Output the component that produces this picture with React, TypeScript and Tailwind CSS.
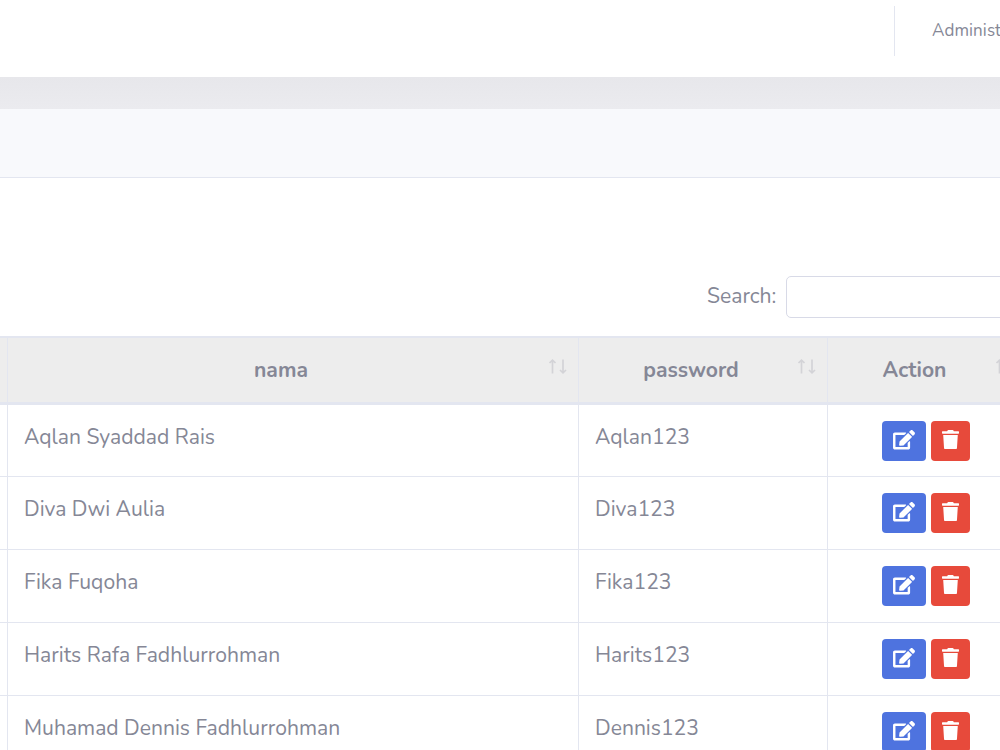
import { FaEdit, FaTrash } from "react-icons/fa"

const users = [
  { name: "Aqlan Syaddad Rais", password: "Aqlan123" },
  { name: "Diva Dwi Aulia", password: "Diva123" },
  { name: "Fika Fuqoha", password: "Fika123" },
  { name: "Harits Rafa Fadhlurrohman", password: "Harits123" },
  { name: "Muhamad Dennis Fadhlurrohman", password: "Dennis123" },
]

function SortArrows() {
  return (
    <svg
      width="19"
      height="15"
      viewBox="0 0 19 15"
      fill="none"
      stroke="#d3d3d7"
      strokeWidth="1.7"
      className="absolute right-[11px] top-[21px]"
    >
      <path d="M4.5 14.5V1.5M1.5 4L4.5 1.2L7.5 4" />
      <path d="M15 0.5V13.5M12 11L15 13.8L18 11" />
    </svg>
  )
}

function HeaderCell({ label }: { label: string }) {
  return (
    <th className="relative border-r border-[#e3e6f0] pl-4 pr-10 text-center font-bold">
      {label}
      <SortArrows />
    </th>
  )
}

function Topbar() {
  return (
    <header className="flex h-[77px] shrink-0 items-start justify-end bg-white pt-[6px]">
      <div className="h-[50px] w-px bg-[#e3e6f0]" />
      <div className="w-[105px] overflow-hidden whitespace-nowrap pl-[37px] pt-[13px] text-[17px] leading-6 tracking-[0.1px]">
        Administ
      </div>
    </header>
  )
}

function UserTable() {
  return (
    <table className="w-[1026px] table-fixed border-separate border-spacing-0">
      <colgroup>
        <col className="w-2" />
        <col className="w-[571px]" />
        <col className="w-[249px]" />
        <col className="w-[198px]" />
      </colgroup>
      <thead>
        <tr className="bg-[#ededed] [&>th]:h-[69px] [&>th]:border-b-[3px] [&>th]:border-t-2 [&>th]:border-[#e3e6f0]">
          <th className="border-r" />
          <HeaderCell label="nama" />
          <HeaderCell label="password" />
          <HeaderCell label="Action" />
        </tr>
      </thead>
      <tbody>
        {users.map((user) => (
          <tr
            key={user.name}
            className="h-[73px] align-top first:h-[72px] [&>td]:border-b [&>td]:border-r [&>td]:border-[#e3e6f0]"
          >
            <td />
            <td className="whitespace-nowrap px-4 pt-4">{user.name}</td>
            <td className="whitespace-nowrap px-4 pt-4">{user.password}</td>
            <td className="pr-0.5 pt-4">
              <div className="flex justify-center gap-[5px] text-white">
                <button className="flex h-10 w-[44px] items-center justify-center rounded bg-[#4e73df]">
                  <FaEdit className="-mt-0.5 h-[19.5px] w-[22px]" />
                </button>
                <button className="flex h-10 w-[39px] items-center justify-center rounded bg-[#e74a3b]">
                  <FaTrash className="-mt-[3px] h-[19.5px] w-[17px]" />
                </button>
              </div>
            </td>
          </tr>
        ))}
      </tbody>
    </table>
  )
}

export default function App() {
  return (
    <div className="flex h-[750px] w-[1000px] flex-col overflow-hidden bg-white font-['Nunito','Lato',sans-serif] text-[21.12px] leading-[33px] text-[#858796]">
      <Topbar />
      <div className="h-8 shrink-0 bg-linear-to-b from-[#e7e7eb] to-[#ebebef]" />
      <div className="h-[69px] shrink-0 border-b border-[#e3e6f0] bg-[#f8f9fc]" />
      <main className="flex flex-col pt-[98px]">
        <label className="mb-[18px] flex h-[42px] items-start pl-[707px]">
          <span className="w-[79px] shrink-0 pt-1">Search:</span>
          <input
            type="search"
            className="h-[42px] w-[270px] shrink-0 rounded-[5px] border border-[#d8dae7] bg-white px-3 outline-none"
          />
        </label>
        <UserTable />
      </main>
    </div>
  )
}
